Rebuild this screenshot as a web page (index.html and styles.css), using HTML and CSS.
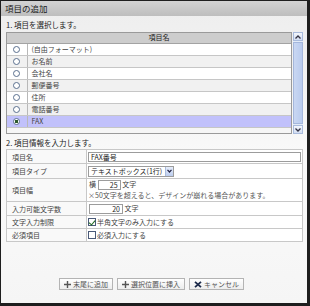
FILE: index.html
```html
<!DOCTYPE html>
<html lang="ja">
<head>
  <meta charset="UTF-8">
  <title>項目の追加</title>
  <link rel="stylesheet" href="styles.css">
</head>
<body>
  <div class="dialog">
    <div class="titlebar">項目の追加</div>
    <div class="content">
      <p class="step">1. 項目を選択します。</p>
      <div class="picker">
        <div class="list">
          <table class="items">
            <tr class="head"><th class="radio-col"></th><th>項目名</th></tr>
            <tr><td class="radio-col"><span class="radio"></span></td><td>(自由フォーマット)</td></tr>
            <tr class="alt"><td class="radio-col"><span class="radio"></span></td><td>お名前</td></tr>
            <tr><td class="radio-col"><span class="radio"></span></td><td>会社名</td></tr>
            <tr class="alt"><td class="radio-col"><span class="radio"></span></td><td>郵便番号</td></tr>
            <tr><td class="radio-col"><span class="radio"></span></td><td>住所</td></tr>
            <tr class="alt"><td class="radio-col"><span class="radio"></span></td><td>電話番号</td></tr>
            <tr class="selected"><td class="radio-col"><span class="radio on"></span></td><td>FAX</td></tr>
          </table>
        </div>
        <div class="scrollbar">
          <span class="sb-btn">
            <svg width="6" height="4" viewBox="0 0 6 4"><path d="M0.5 3.5 L3 1 L5.5 3.5" fill="none" stroke="#334" stroke-width="1.3"/></svg>
          </span>
          <span class="sb-thumb"></span>
          <span class="sb-btn">
            <svg width="6" height="4" viewBox="0 0 6 4"><path d="M0.5 0.5 L3 3 L5.5 0.5" fill="none" stroke="#334" stroke-width="1.3"/></svg>
          </span>
        </div>
      </div>

      <p class="step step-two">2. 項目情報を入力します。</p>
      <table class="form">
        <tr class="r-name">
          <th>項目名</th>
          <td><span class="field wide">FAX番号</span></td>
        </tr>
        <tr class="r-type">
          <th>項目タイプ</th>
          <td>
            <span class="select">テキストボックス(1行)
              <span class="select-btn">
                <svg width="5" height="4" viewBox="0 0 5 4"><path d="M0.5 0.8 L2.5 3 L4.5 0.8" fill="none" stroke="#224" stroke-width="1.2"/></svg>
              </span>
            </span>
          </td>
        </tr>
        <tr class="r-width">
          <th>項目幅</th>
          <td>
            <div class="line">横 <span class="field num short">25</span> 文字</div>
            <div class="note">×50文字を超えると、デザインが崩れる場合があります。</div>
          </td>
        </tr>
        <tr class="r-max">
          <th>入力可能文字数</th>
          <td><div class="line"><span class="field num">20</span> 文字</div></td>
        </tr>
        <tr class="r-limit">
          <th>文字入力制限</th>
          <td><label class="check"><span class="box on"></span>半角文字のみ入力にする</label></td>
        </tr>
        <tr class="r-req">
          <th>必須項目</th>
          <td><label class="check"><span class="box"></span>必須入力にする</label></td>
        </tr>
      </table>

      <div class="actions">
        <button class="btn">
          <svg width="7" height="7" viewBox="0 0 7 7"><path d="M3.5 0 V7 M0 3.5 H7" stroke="#555" stroke-width="1.4"/></svg>末尾に追加
        </button>
        <button class="btn">
          <svg width="7" height="7" viewBox="0 0 7 7"><path d="M3.5 0 V7 M0 3.5 H7" stroke="#555" stroke-width="1.4"/></svg>選択位置に挿入
        </button>
        <button class="btn">
          <svg width="8" height="7" viewBox="0 0 8 7"><path d="M1 0.8 L7 6.2 M7 0.8 L1 6.2" stroke="#1c2a4a" stroke-width="1.8"/></svg>キャンセル
        </button>
      </div>
    </div>
  </div>
</body>
</html>
```

FILE: styles.css
```css
* {
  margin: 0;
  padding: 0;
  box-sizing: border-box;
}

body {
  margin: 0;
  font-family: "Noto Sans CJK JP", sans-serif;
  font-size: 7px;
  color: #444;
}

.dialog {
  width: 310px;
  height: 306px;
  border-style: solid;
  border-color: #1e1e1e;
  border-width: 1px 3px 3px 1px;
  background: linear-gradient(#ededed, #fafafa 55%, #f5f5f5);
  display: flex;
  flex-direction: column;
}

.titlebar {
  height: 15px;
  line-height: 15px;
  padding-left: 4px;
  font-size: 8.5px;
  color: #222;
  background: linear-gradient(#d3d3d3, #bdbdbd);
}

.content {
  flex: 1;
  padding: 0 4px 0 5px;
  display: flex;
  flex-direction: column;
}

.step {
  height: 16px;
  padding-top: 2px;
  line-height: 14px;
  font-size: 7.5px;
  color: #222;
}

.step-two {
  height: 15px;
  padding-top: 3px;
  line-height: 12px;
}

/* item list */
.picker {
  display: grid;
  grid-template-columns: 1fr 10px;
  gap: 1px;
  height: 102px;
}

.list {
  border: 1px solid #9a9a9a;
  background: #f6f6f6;
  overflow: hidden;
}

.items {
  width: 100%;
  border-collapse: collapse;
}

.items th,
.items td {
  height: 12px;
  line-height: 11px;
  padding: 0 4px;
  text-align: left;
  font-weight: normal;
  border-bottom: 1px solid #c6c6c6;
  background: #fff;
}

.items .head th {
  height: 10px;
  line-height: 9px;
  text-align: center;
  background: #cdcdcd;
  border-bottom: 1px solid #a3a3a3;
  color: #222;
}

.items .alt td {
  background: #f1f1f1;
}

.items .selected td {
  background: #c1c1fb;
}

.items .radio-col {
  width: 20px;
  padding: 0;
  text-align: center;
  border-right: 1px solid #b8b8b8;
}

.items .head .radio-col {
  border-right: none;
}

.radio {
  display: inline-block;
  width: 7px;
  height: 7px;
  border: 1px solid #5a6f8e;
  border-radius: 50%;
  background: #fff;
  vertical-align: middle;
}

.radio.on {
  background: radial-gradient(circle, #2e5a2e 0 1.6px, #fff 2px);
}

.scrollbar {
  display: flex;
  flex-direction: column;
  background: #e3ebf8;
}

.sb-btn {
  height: 9px;
  display: flex;
  align-items: center;
  justify-content: center;
  background: linear-gradient(#f4f7fd, #d2ddf2);
  border: 1px solid #a9bbdc;
}

.sb-thumb {
  flex: 1;
  margin: 1px 0;
  background: linear-gradient(90deg, #c9d7f2, #b9cbee);
  border: 1px solid #a4b7dc;
}

/* item settings */
.form {
  width: 100%;
  border-collapse: collapse;
  border: 1px solid #a9a9a9;
  background: #fff;
}

.form th,
.form td {
  border: 1px solid #c8c8c8;
  font-weight: normal;
  text-align: left;
  vertical-align: middle;
}

.form th {
  width: 80px;
  padding-left: 5px;
  background: #f9f9f9;
}

.form td {
  padding-left: 1px;
  padding-right: 1px;
}

.r-name { height: 14px; }
.r-type { height: 15px; }
.r-width { height: 23px; }
.r-max { height: 14px; }
.r-limit { height: 13px; }
.r-req { height: 13px; }

.field {
  display: inline-block;
  height: 10px;
  line-height: 8px;
  padding: 0 2px;
  border: 1px solid #9c9c9c;
  background: #fff;
  color: #222;
  vertical-align: middle;
}

.field.wide {
  display: block;
  width: 100%;
}

.field.num {
  width: 34px;
  text-align: right;
}

.field.num.short {
  width: 23px;
}

.select {
  position: relative;
  display: inline-block;
  width: 86px;
  height: 11px;
  line-height: 9px;
  padding-left: 2px;
  border: 1px solid #9c9c9c;
  background: #fff;
  color: #222;
  vertical-align: middle;
}

.select-btn {
  position: absolute;
  top: 0;
  right: 0;
  width: 8px;
  height: 9px;
  display: flex;
  align-items: center;
  justify-content: center;
  background: linear-gradient(#e6edfb, #bccdee);
  border-left: 1px solid #a9bbdc;
}

.line {
  line-height: 10px;
  padding-left: 1px;
}

.note {
  line-height: 11px;
  color: #555;
}

.check {
  display: flex;
  align-items: center;
  line-height: 10px;
}

.box {
  width: 8px;
  height: 8px;
  margin-right: 1px;
  border: 1px solid #4a5a78;
  background: #fff;
}

.box.on {
  position: relative;
}

.box.on::after {
  content: "";
  position: absolute;
  left: 1px;
  top: 0;
  width: 3px;
  height: 5px;
  border: solid #1f6a1f;
  border-width: 0 1.5px 1.5px 0;
  transform: rotate(40deg);
}

/* buttons */
.actions {
  display: flex;
  justify-content: center;
  gap: 4px;
  margin-top: 36px;
  padding-right: 6px;
}

.btn {
  height: 12px;
  display: flex;
  align-items: center;
  gap: 2px;
  padding: 0 4px;
  font-family: inherit;
  font-size: 7px;
  color: #555;
  border: 1px solid #b4b4b4;
  background: linear-gradient(#ffffff, #ededed);
}
```
